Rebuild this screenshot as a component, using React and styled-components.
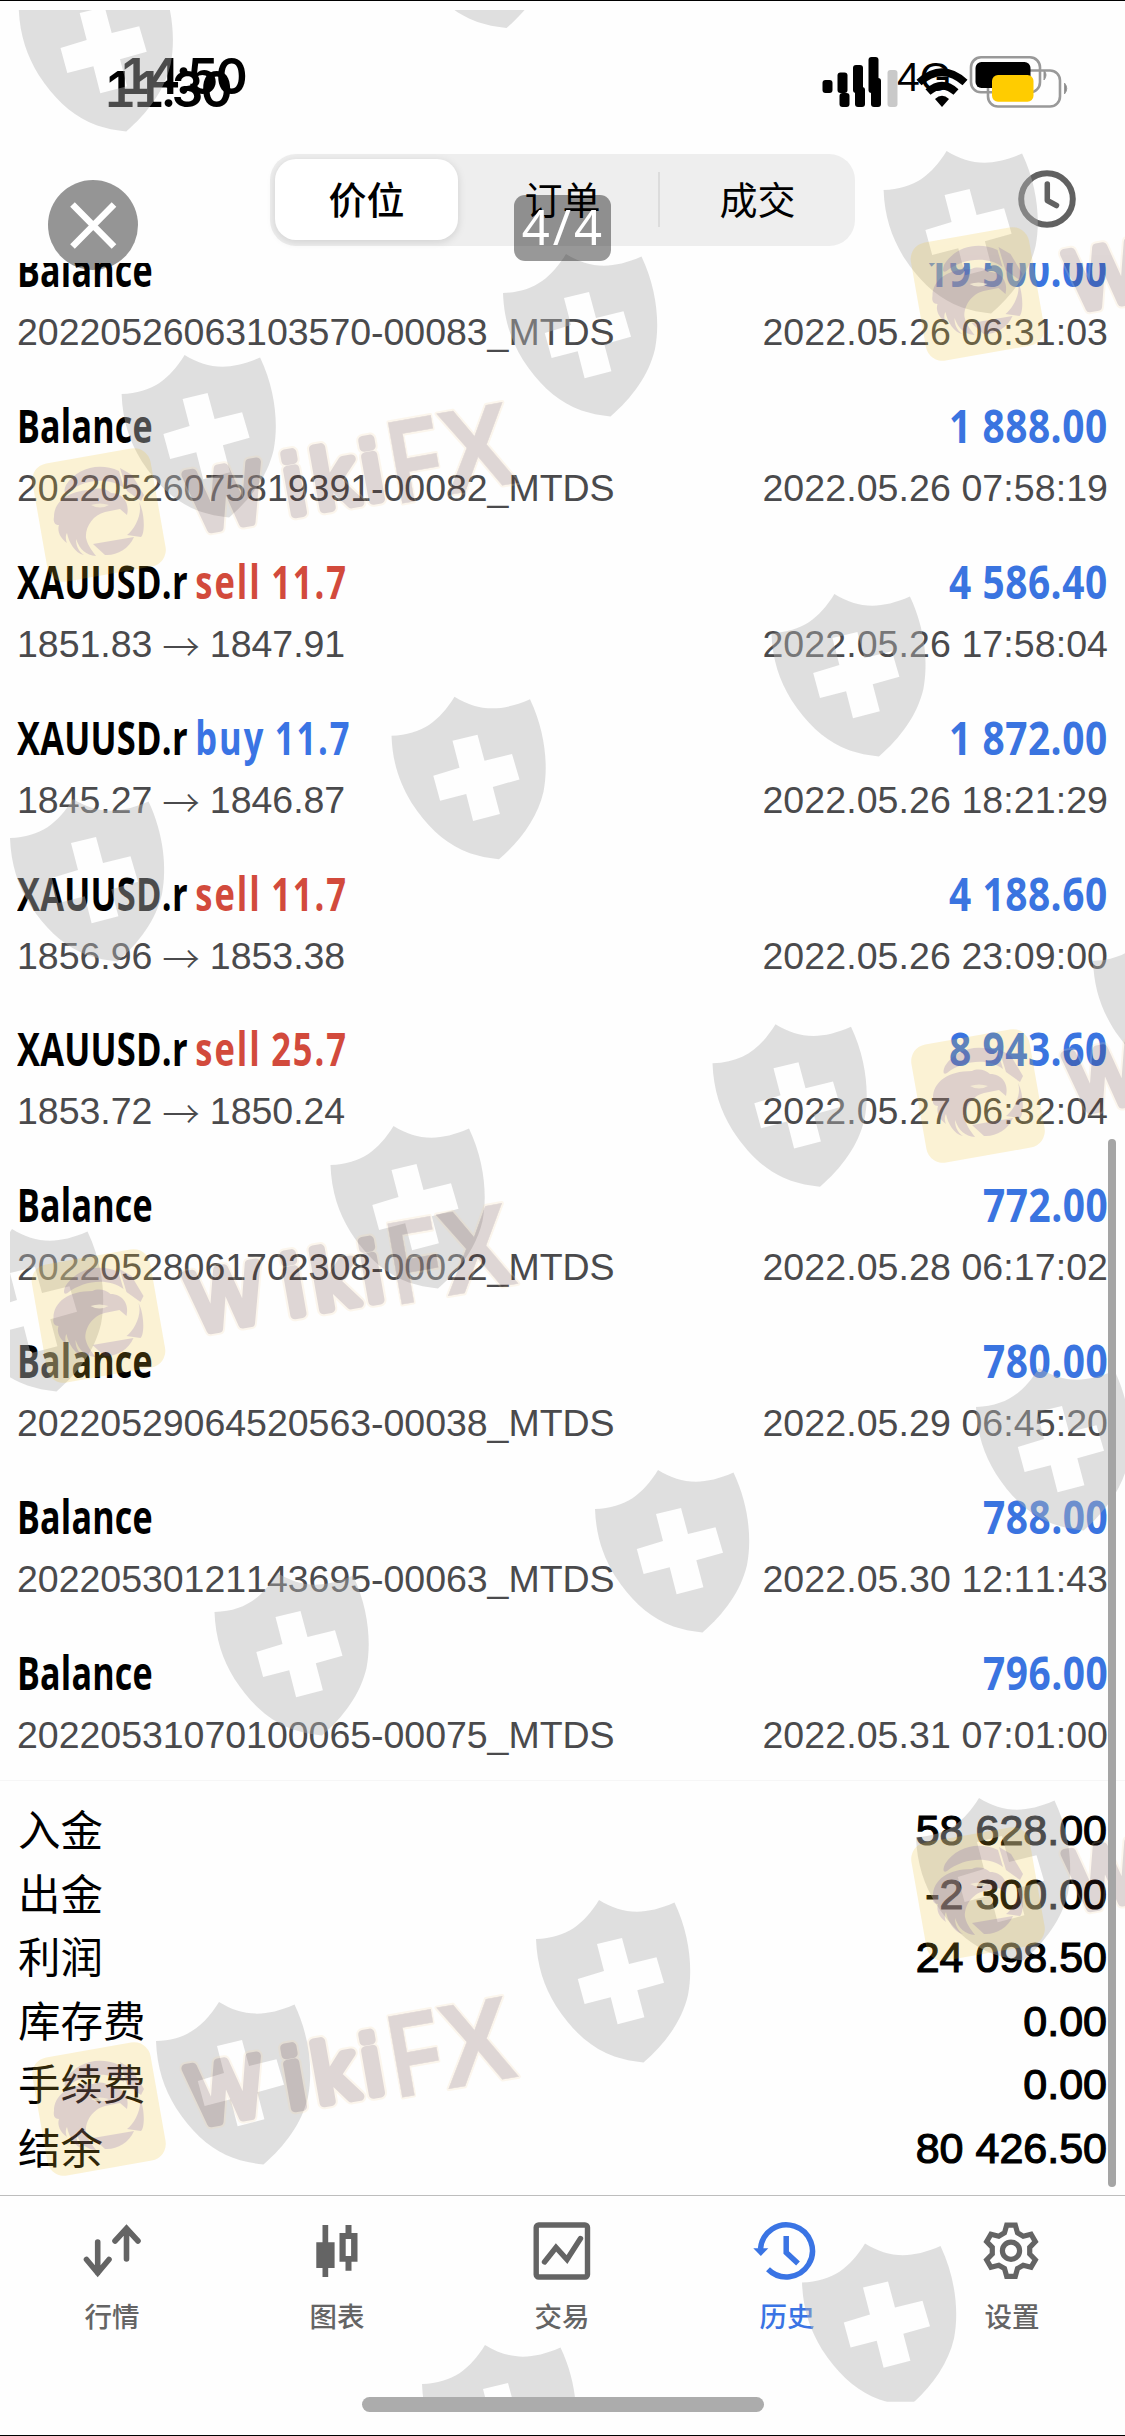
import React from "react";
import styled, { createGlobalStyle } from "styled-components";

const GlobalStyle = createGlobalStyle`
  html, body { margin: 0; padding: 0; background: #fefefe; }
  * { box-sizing: border-box; }
`;

const LATIN = `"Liberation Sans", "Noto Sans CJK SC", sans-serif`;
const CJK = `"Noto Sans CJK SC", "Liberation Sans", sans-serif`;

const Screen = styled.main`
  position: relative;
  display: flex;
  flex-direction: column;
  width: 1125px;
  height: 2436px;
  overflow: hidden;
  background: #fefefe;
  border-top: 1px solid #000;
  border-bottom: 1px solid #000;
  font-family: ${LATIN};
  font-kerning: none;
  color: #000;
`;

/* status bar */
const StatusBar = styled.div`
  position: relative;
  flex: none;
  height: 153px;
`;
const Time = styled.span`
  position: absolute;
  left: ${(p) => p.$x}px;
  top: ${(p) => p.$y}px;
  font: 600 50px/50px Inter, sans-serif;
  font-variant-numeric: tabular-nums;
  letter-spacing: -3.5px;
  white-space: nowrap;
`;
const Network = styled.span`
  position: absolute;
  left: 897px;
  top: 56px;
  font-size: 41px;
  line-height: 40px;
`;
const StatusIcons = styled.svg`
  position: absolute;
  left: 815px;
  top: 49px;
`;

/* header */
const Header = styled.header`
  flex: none;
  display: flex;
  justify-content: space-between;
  height: 109px;
  padding: 0 49px 0 270px;
`;
const Segments = styled.div`
  display: grid;
  grid-template-columns: repeat(3, 1fr);
  width: 585px;
  height: 92px;
  padding: 5px 0 6px;
  border-radius: 26px;
  background: #eeeeee;
`;
const Segment = styled.button`
  display: flex;
  align-items: center;
  justify-content: center;
  border: 0;
  padding: 0 0 4px;
  border-radius: 21px;
  font: ${(p) => (p.$active ? 500 : 400)} 38px/50px ${CJK};
  color: #000;
  background: ${(p) => (p.$active ? "#fff" : "transparent")};
  box-shadow: ${(p) => (p.$active ? "0 2px 8px rgba(0,0,0,.13)" : "none")};
  ${(p) => p.$active && "margin: 0 7px 0 5px;"}
  ${(p) =>
    p.$divided &&
    "background: linear-gradient(#dcdcdc, #dcdcdc) right 0 center / 2px 55px no-repeat; border-radius: 0;"}
`;
const ClockIcon = styled.svg`
  margin-top: 16px;
`;
const CloseButton = styled.button`
  position: absolute;
  left: 48px;
  top: 179px;
  width: 90px;
  height: 90px;
  border: 0;
  padding: 0;
  border-radius: 50%;
  background: rgba(0, 0, 0, 0.41);
`;
const PageCount = styled.div`
  position: absolute;
  left: 514px;
  top: 194px;
  width: 97px;
  height: 66px;
  border-radius: 11px;
  background: rgba(0, 0, 0, 0.4);
  color: #fff;
  font: 400 49px/62px "Noto Sans", sans-serif;
  letter-spacing: 3px;
  text-indent: 2px;
  text-align: center;
`;

/* history list */
const History = styled.section`
  flex: none;
  height: 1518px;
  overflow: hidden;
  padding: 0 17px 0 17px;
  border-bottom: 1px solid #f6f6f6;
`;
const Deal = styled.article`
  height: 155.9px;
  &:first-child { margin-top: -25px; }
`;
const Line = styled.div`
  display: flex;
  justify-content: space-between;
  white-space: nowrap;
`;
const Title = styled.div`
  display: flex;
  gap: 10px;
  font: 700 46px/62px "Open Sans", sans-serif;
  font-kerning: none;
  letter-spacing: ${(p) => (p.$amount ? 0.6 : 0.3)}px;
  transform: scaleX(${(p) => p.$scale});
  transform-origin: ${(p) => (p.$amount ? "right" : "left")};
  color: ${(p) => (p.$amount ? "#3a74e0" : "#000")};
`;
const Side = styled.span`
  letter-spacing: 2.6px;
  word-spacing: -2px;
  color: ${(p) => (p.$sell ? "#d24a3c" : "#3a74e4")};
`;
const Detail = styled.div`
  display: flex;
  gap: 10px;
  font-size: 37.5px;
  line-height: 65px;
  letter-spacing: ${(p) => (p.$date ? 0.08 : -0.03)}px;
  color: #4a4a4c;
`;
const Arrow = styled.span`
  font: 300 37.5px/65px ${CJK};
`;

/* totals */
const Totals = styled.section`
  flex: none;
  padding: 18px 18px 0 18px;
  height: 414px;
`;
const Total = styled.div`
  display: flex;
  justify-content: space-between;
  align-items: center;
  height: 63.5px;
`;
const Label = styled.span`
  padding-bottom: 5px;
  font: 400 42.5px/58px ${CJK};
`;
const Sum = styled.span`
  font: 400 43px/63px ${LATIN};
  -webkit-text-stroke: 1.2px #000;
`;
const ScrollThumb = styled.div`
  position: absolute;
  left: 1108px;
  top: 1138px;
  width: 8px;
  height: 1048px;
  border-radius: 4px;
  background: #a5a5a5;
`;

/* tabs */
const TabBar = styled.nav`
  flex: 1;
  display: grid;
  grid-template-columns: repeat(5, 225px);
  border-top: 1px solid #bdbdbd;
  padding-top: 24px;
`;
const Tab = styled.a`
  display: flex;
  flex-direction: column;
  align-items: center;
  gap: 12px;
  padding-right: 1px;
  font: 500 27.5px/38px ${CJK};
  color: ${(p) => (p.$active ? "#3a74e4" : "#646464")};
  svg { overflow: visible; }
`;
const HomeBar = styled.div`
  position: absolute;
  left: 362px;
  top: 2396px;
  width: 402px;
  height: 15px;
  border-radius: 8px;
  background: #acacac;
`;
const Watermarks = styled.svg`
  position: absolute;
  left: 0;
  top: -1px;
  pointer-events: none;
`;

const deals = [
  ["Balance", null, "20220526063103570-00083_MTDS", "19 500.00", "2022.05.26 06:31:03"],
  ["Balance", null, "20220526075819391-00082_MTDS", "1 888.00", "2022.05.26 07:58:19"],
  ["XAUUSD.r", "sell 11.7", ["1851.83", "1847.91"], "4 586.40", "2022.05.26 17:58:04"],
  ["XAUUSD.r", "buy 11.7", ["1845.27", "1846.87"], "1 872.00", "2022.05.26 18:21:29"],
  ["XAUUSD.r", "sell 11.7", ["1856.96", "1853.38"], "4 188.60", "2022.05.26 23:09:00"],
  ["XAUUSD.r", "sell 25.7", ["1853.72", "1850.24"], "8 943.60", "2022.05.27 06:32:04"],
  ["Balance", null, "20220528061702308-00022_MTDS", "772.00", "2022.05.28 06:17:02"],
  ["Balance", null, "20220529064520563-00038_MTDS", "780.00", "2022.05.29 06:45:20"],
  ["Balance", null, "20220530121143695-00063_MTDS", "788.00", "2022.05.30 12:11:43"],
  ["Balance", null, "20220531070100065-00075_MTDS", "796.00", "2022.05.31 07:01:00"],
];

const totals = [
  ["入金", "58 628.00"],
  ["出金", "-2 300.00"],
  ["利润", "24 098.50"],
  ["库存费", "0.00"],
  ["手续费", "0.00"],
  ["结余", "80 426.50"],
];

const shieldSpots = [
  [81.7, -31], [462, -134.5], [946.6, 151], [566, 254], [184.6, 355],
  [834.4, 594], [454.5, 696.7], [73, 799], [1156, 922], [775.5, 1024.3],
  [393.5, 1126], [12, 1229], [1039, 1368], [658, 1470], [277.5, 1573],
  [979, 1798], [599, 1900], [219, 2002], [865, 2243.5], [485, 2345],
];
const brandSpots = [
  [99, 515], [98.5, 1316], [99, 2109], [977.5, 294], [978, 1096], [978, 1894],
];

const Shield = () => (
  <path
    fillRule="evenodd"
    d="M0 0C23 14 45 16 75.500 2.500C91 35 94 70 89 95C83 121 66 144 44.500 162.500C30 161 18 158 7 153C-12 144 -28 129 -43 106C-55 86 -62 66 -63 39C-32 38 -15 24 0 0ZM-2 44L23 38L30 64L57.500 57.300L65 82.700L38.300 90.300L45.400 117.300L18.600 124.300L11.700 97.300L-14.400 104L-21.200 79L5 71Z"
  />
);

const wordStyle = { fontFamily: "Liberation Sans, sans-serif" };
const Word = ({ outline }) => {
  const extra = outline ? 4 : 0;
  const color = outline ? "#f6d9a8" : "#5c302a";
  return (
    <g fill={color} stroke={color} strokeLinejoin="round" strokeLinecap="round" style={wordStyle}>
      <g fontSize="84" strokeWidth={9 + extra}>
        <text x="92" y="33" textLength="73" lengthAdjust="spacingAndGlyphs">W</text>
        <text x="188" y="33">i</text>
        <text x="217" y="33">k</text>
        <text x="267" y="33">i</text>
      </g>
      <g fontSize="119" fontWeight="700" strokeWidth={0.5 + extra}>
        <text x="295" y="41" textLength="52" lengthAdjust="spacingAndGlyphs">F</text>
        <text x="347" y="41" textLength="73" lengthAdjust="spacingAndGlyphs">X</text>
      </g>
    </g>
  );
};

const Brand = ({ x, y }) => (
  <g transform={`translate(${x} ${y})`}>
    <g opacity="0.2" transform="rotate(-10)">
      <rect x="-60" y="-60" width="120" height="120" rx="17" fill="#eec32d" />
    </g>
    {/* eagle head inside the aperture ring */}
    <g opacity="0.18" transform="translate(-80 -80)" fill="#5f3ca8">
      <path d="M47 50C58 33 80 27 100 36L105 53C90 42 66 44 49 57C46 59 44 57 47 50Z" />
      <path d="M101 33L113 40L125 60L122 66L108 56Z" />
      <path d="M120 67C124 78 116 94 108 100L122 102C126 99 126 78 120 67Z" />
      <path d="M74 109L115 102C110 114 97 121 86 120Z" />
      <path d="M35 82C35 66 50 55 74 55C80 52 88 54 92 58C104 58 111 68 108 80L101 74L86 77C74 80 66 92 67 103C69 112 75 118 77 121C67 120 61 115 57 104C57 110 59 116 65 120C56 118 50 108 48 98C46 101 47 106 48 108C41 103 38 96 40 90C36 90 34 87 35 82Z" />
    </g>
    <g transform="translate(-80 -80)" fill="#f8efd4" opacity="0.8">
      <path d="M72 70Q81 75 90 70Q81 67 72 70Z" />
    </g>
    <g opacity="0.19" transform="rotate(-10)">
      <Word outline />
      <Word />
    </g>
  </g>
);

const gearPoints = Array.from({ length: 6 })
  .flatMap((_, k) =>
    [[19, -20], [26, -9.5], [26, 9.5], [19, 20]].map(([r, a]) => {
      const t = ((k * 60 + a) * Math.PI) / 180;
      return `${(31 + r * Math.sin(t)).toFixed(2)},${(30.7 - r * Math.cos(t)).toFixed(2)}`;
    })
  )
  .join(" ");

const QuotesIcon = () => (
  <svg width="64" height="64" viewBox="0 0 64 64" fill="none" stroke="currentColor" strokeWidth="5.600" strokeLinecap="round">
    <path d="M17.700 22V53M6.500 39.500L17.700 53L29 39.500M46.500 39V9M35 21L46.500 8.500L58 21" />
  </svg>
);
const ChartIcon = () => (
  <svg width="64" height="64" viewBox="0 0 64 64" fill="currentColor">
    <path d="M17.500 5h5.700v17.300h6.400V48h-6.400v9h-5.700v-9h-6.200V22.300h6.200zM40.500 5h6v8h6v28.700h-6v9h-6v-9h-6V13h6zM40.700 19v17h5.400V19z" fillRule="evenodd" />
  </svg>
);
const TradeIcon = () => (
  <svg width="64" height="64" viewBox="0 0 64 64" fill="none" stroke="currentColor" strokeWidth="5.400">
    <rect x="6.200" y="5" width="51.300" height="52" rx="2.500" />
    <path d="M14.500 42L26 27.500L37 39.500L50.500 18.500" strokeLinecap="round" />
  </svg>
);
const HistoryIcon = () => (
  <svg width="64" height="64" viewBox="0 0 64 64" fill="none" stroke="currentColor" strokeWidth="5.500">
    <path d="M5.500 29A26 26 0 1 1 13 49.200M31.200 16V32.500L43 43.500" />
    <path d="M-1.700 28.300H13.300L5.800 36Z" fill="currentColor" stroke="none" />
  </svg>
);
const SettingsIcon = () => (
  <svg width="64" height="64" viewBox="0 0 64 64" fill="none" stroke="currentColor" strokeWidth="5.200">
    <polygon points={gearPoints} />
    <circle cx="31" cy="30.700" r="8.600" />
  </svg>
);

const tabs = [
  ["行情", QuotesIcon],
  ["图表", ChartIcon],
  ["交易", TradeIcon],
  ["历史", HistoryIcon],
  ["设置", SettingsIcon],
];

export default function App() {
  return (
    <Screen>
      <GlobalStyle />
      <StatusBar>
        <Time $x={119} $y={50}>14:50</Time>
        <Time $x={104} $y={63}>11:30</Time>
        <Network>4G</Network>
        <StatusIcons width="260" height="65" viewBox="815 50 260 65">
          <rect x="822.500" y="80" width="10" height="13" rx="3" />
          <rect x="837.500" y="72.500" width="10" height="20.500" rx="3" />
          <rect x="853" y="65" width="10" height="28" rx="3" />
          <rect x="868.500" y="57" width="10" height="36" rx="3" />
          <rect x="839.500" y="93" width="10" height="14" rx="3" />
          <rect x="855" y="87" width="10" height="20" rx="3" />
          <rect x="871" y="78" width="10" height="29" rx="3" />
          <rect x="887.500" y="70" width="10" height="37" rx="3" fill="#c9c9c9" />
          <g fill="none" stroke="#000" strokeWidth="7.500">
            <path d="M919 82.500Q942 62 965 82.500" />
            <path d="M928 92Q942 79.500 956 92" />
          </g>
          <path d="M935 99Q942 92.500 949 99L942 107Z" />
          <g fill="none" stroke="#999" strokeWidth="2.600">
            <rect x="971" y="57.300" width="69" height="35" rx="10" />
            <rect x="988" y="70.500" width="72" height="36" rx="10" />
          </g>
          <path d="M1044 70Q1048 75 1044 80ZM1064.500 83Q1069 88.500 1064.500 94Z" fill="#888" stroke="#999" />
          <rect x="975.500" y="62" width="55" height="26" rx="6" />
          <rect x="992" y="75" width="41.500" height="26.700" rx="6" fill="#ffcc00" />
        </StatusIcons>
      </StatusBar>

      <Header>
        <Segments>
          <Segment $active>价位</Segment>
          <Segment $divided>订单</Segment>
          <Segment>成交</Segment>
        </Segments>
        <ClockIcon width="58" height="58" viewBox="0 0 58 58" fill="none" stroke="#626262" strokeWidth="6">
          <circle cx="29" cy="29" r="25.800" />
          <path d="M29.300 14V30.500L38.500 35.500" strokeLinecap="round" strokeLinejoin="round" strokeWidth="5.500" />
        </ClockIcon>
      </Header>

      <History>
        {deals.map(([name, side, detail, amount, date]) => (
          <Deal key={date}>
            <Line>
              <Title $scale={side ? 0.75 : 0.74}>
                {name}
                {side && <Side $sell={side.startsWith("sell")}>{side}</Side>}
              </Title>
              <Title $amount $scale={0.845}>{amount}</Title>
            </Line>
            <Line>
              <Detail>
                {Array.isArray(detail) ? (
                  <>
                    {detail[0]}
                    <Arrow>→</Arrow>
                    {detail[1]}
                  </>
                ) : (
                  detail
                )}
              </Detail>
              <Detail $date>{date}</Detail>
            </Line>
          </Deal>
        ))}
      </History>

      <Totals>
        {totals.map(([label, sum]) => (
          <Total key={label}>
            <Label>{label}</Label>
            <Sum>{sum}</Sum>
          </Total>
        ))}
      </Totals>

      <TabBar>
        {tabs.map(([label, Icon]) => (
          <Tab key={label} $active={label === "历史"}>
            <Icon />
            {label}
          </Tab>
        ))}
      </TabBar>

      <Watermarks width="1125" height="2436" viewBox="0 0 1125 2436">
        <clipPath id="inset">
          <rect x="10" y="10" width="1115" height="2391.700" />
        </clipPath>
        <g clipPath="url(#inset)">
          <g fill="#b5b5b5" fillOpacity="0.42">
            {shieldSpots.map(([x, y]) => (
              <g key={`${x}-${y}`} transform={`translate(${x} ${y})`}>
                <Shield />
              </g>
            ))}
          </g>
          {brandSpots.map(([x, y]) => (
            <Brand key={`${x}-${y}`} x={x} y={y} />
          ))}
        </g>
      </Watermarks>

      <CloseButton aria-label="close">
        <svg width="90" height="90" viewBox="0 0 90 90" stroke="#fff" strokeWidth="6.500">
          <path d="M24.500 24.500L66 66.500M66 24.500L24.500 66.500" />
        </svg>
      </CloseButton>
      <PageCount>4/4</PageCount>
      <ScrollThumb />
      <HomeBar />
    </Screen>
  );
}
